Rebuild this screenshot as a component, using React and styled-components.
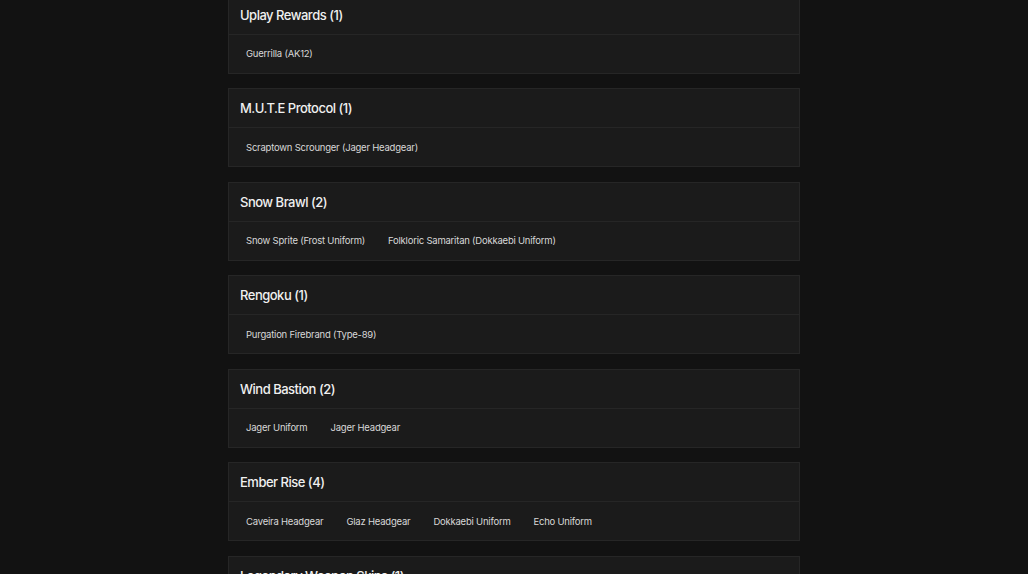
import React from "react";
import styled, { createGlobalStyle } from "styled-components";

const Global = createGlobalStyle`
  html, body { margin: 0; padding: 0; background: #121212; }
  body { font-family: Inter, "Open Sans", sans-serif; overflow: hidden; }
`;

const Page = styled.div`
  width: 572px;
  margin: -5.5px auto 0;
  display: flex;
  flex-direction: column;
  gap: 14.5px;
`;

const Card = styled.section`
  background: #1b1b1b;
  border: 1px solid #262626;
  display: flex;
  flex-direction: column;
`;

const Header = styled.div`
  height: 38px;
  display: flex;
  align-items: center;
  padding: 0 11px;
  border-bottom: 1px solid #262626;
`;

const Title = styled.h2`
  margin: 0;
  font-size: 13px;
  font-weight: 500;
  letter-spacing: -0.5px;
  color: #f0f0f0;
`;

const Body = styled.div`
  height: 38px;
  display: flex;
  align-items: center;
  gap: 23px;
  padding: 0 17px;
`;

const Item = styled.span`
  font-size: 9.5px;
  letter-spacing: -0.22px;
  color: #d8d8d8;
  white-space: nowrap;
`;

const groups = [
  { title: "Uplay Rewards", items: ["Guerrilla (AK12)"] },
  { title: "M.U.T.E Protocol", items: ["Scraptown Scrounger (Jager Headgear)"] },
  { title: "Snow Brawl", items: ["Snow Sprite (Frost Uniform)", "Folkloric Samaritan (Dokkaebi Uniform)"] },
  { title: "Rengoku", items: ["Purgation Firebrand (Type-89)"] },
  { title: "Wind Bastion", items: ["Jager Uniform", "Jager Headgear"] },
  { title: "Ember Rise", items: ["Caveira Headgear", "Glaz Headgear", "Dokkaebi Uniform", "Echo Uniform"] },
  { title: "Legendary Weapon Skins", items: ["Legendary Weapon Skin"] },
];

export default function App() {
  return (
    <>
      <Global />
      <Page>
        {groups.map((g) => (
          <Card key={g.title}>
            <Header>
              <Title>
                {g.title} ({g.items.length})
              </Title>
            </Header>
            <Body>
              {g.items.map((it) => (
                <Item key={it}>{it}</Item>
              ))}
            </Body>
          </Card>
        ))}
      </Page>
    </>
  );
}
